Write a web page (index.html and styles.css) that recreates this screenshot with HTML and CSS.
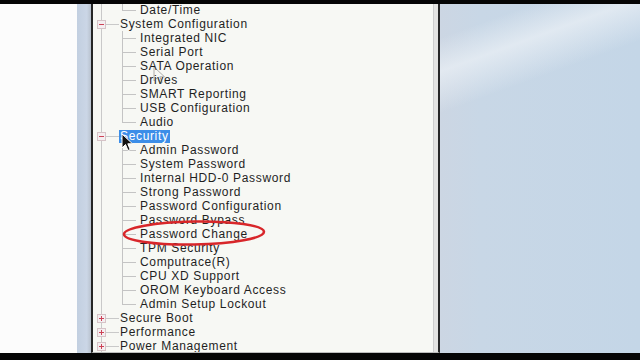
FILE: index.html
```html
<!DOCTYPE html>
<html>
<head>
<meta charset="utf-8">
<link rel="stylesheet" href="styles.css">
</head>
<body>
<div class="topbar"></div>
<div class="main">
  <div class="leftpad"></div>
  <div class="strip"></div>
  <div class="panel">
    <div class="tree">
      <div class="group">
        <div class="row child last"><span class="label">Date/Time</span></div>
      </div>
      <div class="row top"><span class="box minus"></span><span class="hline"></span><span class="label">System Configuration</span></div>
      <div class="group">
        <div class="row child"><span class="label">Integrated NIC</span></div>
        <div class="row child"><span class="label">Serial Port</span></div>
        <div class="row child"><span class="label">SATA Operation</span></div>
        <div class="row child"><span class="label">Drives</span></div>
        <div class="row child"><span class="label">SMART Reporting</span></div>
        <div class="row child"><span class="label">USB Configuration</span></div>
        <div class="row child last"><span class="label">Audio</span></div>
      </div>
      <div class="row top"><span class="box minus"></span><span class="hline"></span><span class="label selected">Security</span></div>
      <div class="group">
        <div class="row child"><span class="label">Admin Password</span></div>
        <div class="row child"><span class="label">System Password</span></div>
        <div class="row child"><span class="label">Internal HDD-0 Password</span></div>
        <div class="row child"><span class="label">Strong Password</span></div>
        <div class="row child"><span class="label">Password Configuration</span></div>
        <div class="row child"><span class="label">Password Bypass</span></div>
        <div class="row child"><span class="label">Password Change</span></div>
        <div class="row child"><span class="label">TPM Security</span></div>
        <div class="row child"><span class="label">Computrace(R)</span></div>
        <div class="row child"><span class="label">CPU XD Support</span></div>
        <div class="row child"><span class="label">OROM Keyboard Access</span></div>
        <div class="row child last"><span class="label">Admin Setup Lockout</span></div>
      </div>
      <div class="row top"><span class="box plus"></span><span class="hline"></span><span class="label">Secure Boot</span></div>
      <div class="row top"><span class="box plus"></span><span class="hline"></span><span class="label">Performance</span></div>
      <div class="row top"><span class="box plus"></span><span class="hline"></span><span class="label">Power Management</span></div>
      <div class="row top"><span class="box plus"></span><span class="hline"></span><span class="label">POST Behavior</span></div>
    </div>
    <div class="edge"></div>
  </div>
  <div class="backdrop"></div>
</div>
<div class="bottombar"></div>

<svg class="ellipse" width="160" height="36" viewBox="0 0 160 36">
  <ellipse cx="79" cy="17" rx="70" ry="11.5" fill="none" stroke="#d8262a" stroke-width="2.6" transform="rotate(-1 79 17)"/>
</svg>
<svg class="cursor" width="14" height="20" viewBox="0 0 14 20">
  <path d="M1 1 L1 15 L4.5 11.5 L7 17.5 L9.2 16.5 L6.8 10.8 L11.5 10.8 Z" fill="#111" stroke="#fff" stroke-width="1"/>
</svg>
<svg class="ghost" width="14" height="20" viewBox="0 0 14 20">
  <path d="M1 1 L1 15 L4.5 11.5 L7 17.5 L9.2 16.5 L6.8 10.8 L11.5 10.8 Z" fill="none" stroke="#555" stroke-width="1"/>
</svg>
</body>
</html>
```

FILE: styles.css
```css
html, body {
  margin: 0;
  padding: 0;
}
body {
  width: 640px;
  height: 360px;
  overflow: hidden;
  display: flex;
  flex-direction: column;
  background: #000;
  position: relative;
}
.topbar {
  height: 4px;
  background: #050505;
  flex: none;
}
.bottombar {
  height: 7px;
  background: #050505;
  flex: none;
}
.main {
  flex: 1;
  display: flex;
  min-height: 0;
}
.leftpad {
  width: 77px;
  background: #fcfcfc;
  flex: none;
}
.strip {
  width: 14px;
  background: linear-gradient(90deg, #c2cfe0, #cbd6e6 70%, #b9c2ce);
  flex: none;
}
.panel {
  width: 349px;
  box-sizing: border-box;
  flex: none;
  display: flex;
  border-left: 2px solid #262626;
  border-right: 2px solid #262626;
  border-bottom: 1px solid #bdbdbd;
  background: #f7f8f4;
  overflow: hidden;
}
.tree {
  flex: 1;
  margin-top: -1px;
  background: linear-gradient(#c9c9c9, #c9c9c9) no-repeat 8px 0 / 1px 100%;
  font-family: "Liberation Sans", Arial, sans-serif;
  font-size: 12px;
  letter-spacing: 0.65px;
  color: #1f1f1f;
}
.edge {
  width: 4px;
  flex: none;
  border-left: 1px solid #cdcdcd;
  background: #e3e3e1;
}
.row {
  height: 14px;
  display: flex;
  align-items: center;
  white-space: nowrap;
}
.row.top .box {
  width: 9px;
  height: 9px;
  box-sizing: border-box;
  margin-left: 4px;
  border: 1px solid #d6c3c7;
  background: #f4eef0 linear-gradient(#cc4256, #cc4256) no-repeat center / 5px 1px;
  flex: none;
}
.row.top .box.plus {
  background: #f4eef0;
  background-image: linear-gradient(#cc4256, #cc4256), linear-gradient(#cc4256, #cc4256);
  background-repeat: no-repeat;
  background-position: center, center;
  background-size: 5px 1px, 1px 5px;
}
.hline {
  width: 13px;
  height: 1px;
  background: #c9c9c9;
  flex: none;
}
.row.top .label {
  padding: 0 1px;
  line-height: 13px;
}
.label.selected {
  background: #3c8ee8;
  color: #fff;
  padding: 0 3px 0 1px;
}
.row.child {
  margin-left: 29px;
  padding-left: 18px;
  background:
    linear-gradient(#c4c4c4, #c4c4c4) no-repeat 0 0 / 1px 100%,
    linear-gradient(#c4c4c4, #c4c4c4) no-repeat 0 7px / 14px 1px;
}
.row.child.last {
  background:
    linear-gradient(#c4c4c4, #c4c4c4) no-repeat 0 0 / 1px 8px,
    linear-gradient(#c4c4c4, #c4c4c4) no-repeat 0 7px / 14px 1px;
}
.backdrop {
  flex: 1;
  background:
    linear-gradient(160deg, rgba(255,255,255,0) 8%, rgba(236,241,246,0.7) 16%, rgba(255,255,255,0) 26%),
    linear-gradient(90deg, #ccd6e3 0, #c8d7e6 40px, #c4d6e7 100%);
}
.ellipse {
  position: absolute;
  left: 115px;
  top: 216px;
}
.cursor {
  position: absolute;
  left: 121px;
  top: 133px;
}
.ghost {
  position: absolute;
  left: 153px;
  top: 66px;
  opacity: 0.45;
}
```
